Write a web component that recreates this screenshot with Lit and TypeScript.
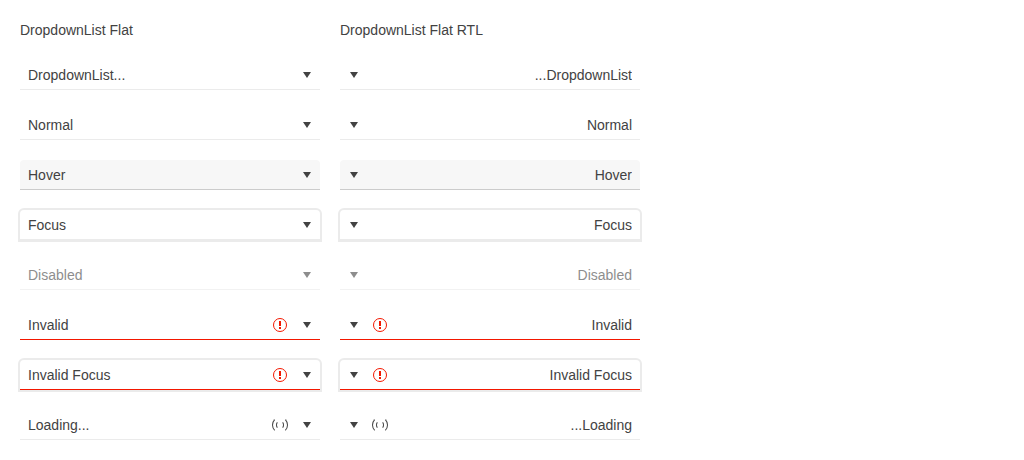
import { LitElement, html, css, svg, nothing } from "lit";
import { customElement, property } from "lit/decorators.js";
import { classMap } from "lit/directives/class-map.js";

type State = "" | "hover" | "focus" | "disabled" | "invalid" | "invalid focus" | "loading";

interface Item {
  text: string;
  state: State;
}

const ITEMS: Item[] = [
  { text: "DropdownList...", state: "" },
  { text: "Normal", state: "" },
  { text: "Hover", state: "hover" },
  { text: "Focus", state: "focus" },
  { text: "Disabled", state: "disabled" },
  { text: "Invalid", state: "invalid" },
  { text: "Invalid Focus", state: "invalid focus" },
  { text: "Loading...", state: "loading" },
];

const caretPath = svg`<path d="M8 11 4 5h8z" fill="currentColor"></path>`;

@customElement("flat-dropdown")
export class FlatDropdown extends LitElement {
  @property() text = "";
  @property() state: State = "";
  @property() direction: "ltr" | "rtl" = "ltr";

  static styles = css`
    :host {
      display: block;
    }
    .picker {
      display: grid;
      align-items: center;
      border-bottom: 1px solid #ebebeb;
      border-radius: 4px 4px 0 0;
      color: #424242;
    }
    .picker.hover,
    .picker:not(.disabled):hover {
      background: #f7f7f7;
      border-bottom-color: #cccccc;
    }
    .picker.focus,
    .picker:focus-within {
      background: #ffffff;
      box-shadow: 0 0 0 2px #ebebeb;
    }
    .picker.disabled {
      opacity: 0.6;
    }
    .picker.invalid {
      border-bottom-color: #f31700;
    }
    .field {
      grid-area: 1 / 1;
      appearance: none;
      width: 100%;
      height: 29px;
      margin: 0;
      padding: 0 8px;
      border: 0;
      outline: 0;
      border-radius: 0;
      background: transparent;
      color: inherit;
      opacity: 1;
      font: 14px/20px "Liberation Sans", Arial, sans-serif;
    }
    .adornments {
      grid-area: 1 / 1;
      justify-self: end;
      display: flex;
      align-items: center;
      gap: 11px;
      padding-inline-end: 5px;
      pointer-events: none;
    }
    .adornments.rtl {
      gap: 10px;
      padding-inline-end: 6px;
    }
    .icon {
      display: block;
      width: 16px;
      height: 16px;
    }
    .alert {
      color: #f31700;
    }
    .spinner {
      display: grid;
      place-items: center;
      width: 16px;
      height: 16px;
    }
    .ring {
      grid-area: 1 / 1;
      box-sizing: border-box;
      width: 16px;
      height: 16px;
      border: 1px solid;
      border-color: transparent currentColor;
      border-radius: 50%;
    }
    .ring.inner {
      width: 8px;
      height: 8px;
    }
  `;

  private statusIcon() {
    if (this.state.startsWith("invalid")) {
      return html`<svg class="icon alert" viewBox="0 0 16 16" aria-hidden="true">
        <circle cx="8" cy="8" r="6.5" fill="none" stroke="currentColor"></circle>
        <path d="M7 4h2v5H7zM7 10h2v2H7z" fill="currentColor"></path>
      </svg>`;
    }
    if (this.state === "loading") {
      return html`<span class="spinner"><span class="ring"></span><span class="ring inner"></span></span>`;
    }
    return nothing;
  }

  render() {
    const classes: Record<string, boolean> = { picker: true };
    for (const name of this.state.split(" ")) if (name) classes[name] = true;
    return html`
      <div class=${classMap(classes)} dir=${this.direction}>
        <select
          class="field"
          aria-label=${this.text}
          aria-invalid=${this.state.startsWith("invalid") ? "true" : "false"}
          ?disabled=${this.state === "disabled"}
        >
          <option>${this.text}</option>
        </select>
        <span class=${classMap({ adornments: true, rtl: this.direction === "rtl" })}>
          ${this.statusIcon()}
          <svg class="icon" viewBox="0 0 16 16" aria-hidden="true">${caretPath}</svg>
        </span>
      </div>
    `;
  }
}

@customElement("app-root")
export class AppRoot extends LitElement {
  static styles = css`
    :host {
      display: block;
      padding: 20px;
      color: #424242;
      font: 14px/20px "Liberation Sans", Arial, sans-serif;
    }
    .columns {
      display: grid;
      grid-template-columns: repeat(auto-fill, 300px);
      grid-template-columns: repeat(2, minmax(0, 300px));
      gap: 20px;
    }
    .column {
      display: grid;
      gap: 20px;
    }
  `;

  private column(title: string, direction: "ltr" | "rtl") {
    return html`
      <section class="column" aria-label=${title}>
        <span>${title}</span>
        ${ITEMS.map(
          (item) => html`<flat-dropdown .text=${item.text} .state=${item.state} .direction=${direction}></flat-dropdown>`
        )}
      </section>
    `;
  }

  render() {
    return html`
      <main class="columns">
        ${this.column("DropdownList Flat", "ltr")} ${this.column("DropdownList Flat RTL", "rtl")}
      </main>
    `;
  }
}
